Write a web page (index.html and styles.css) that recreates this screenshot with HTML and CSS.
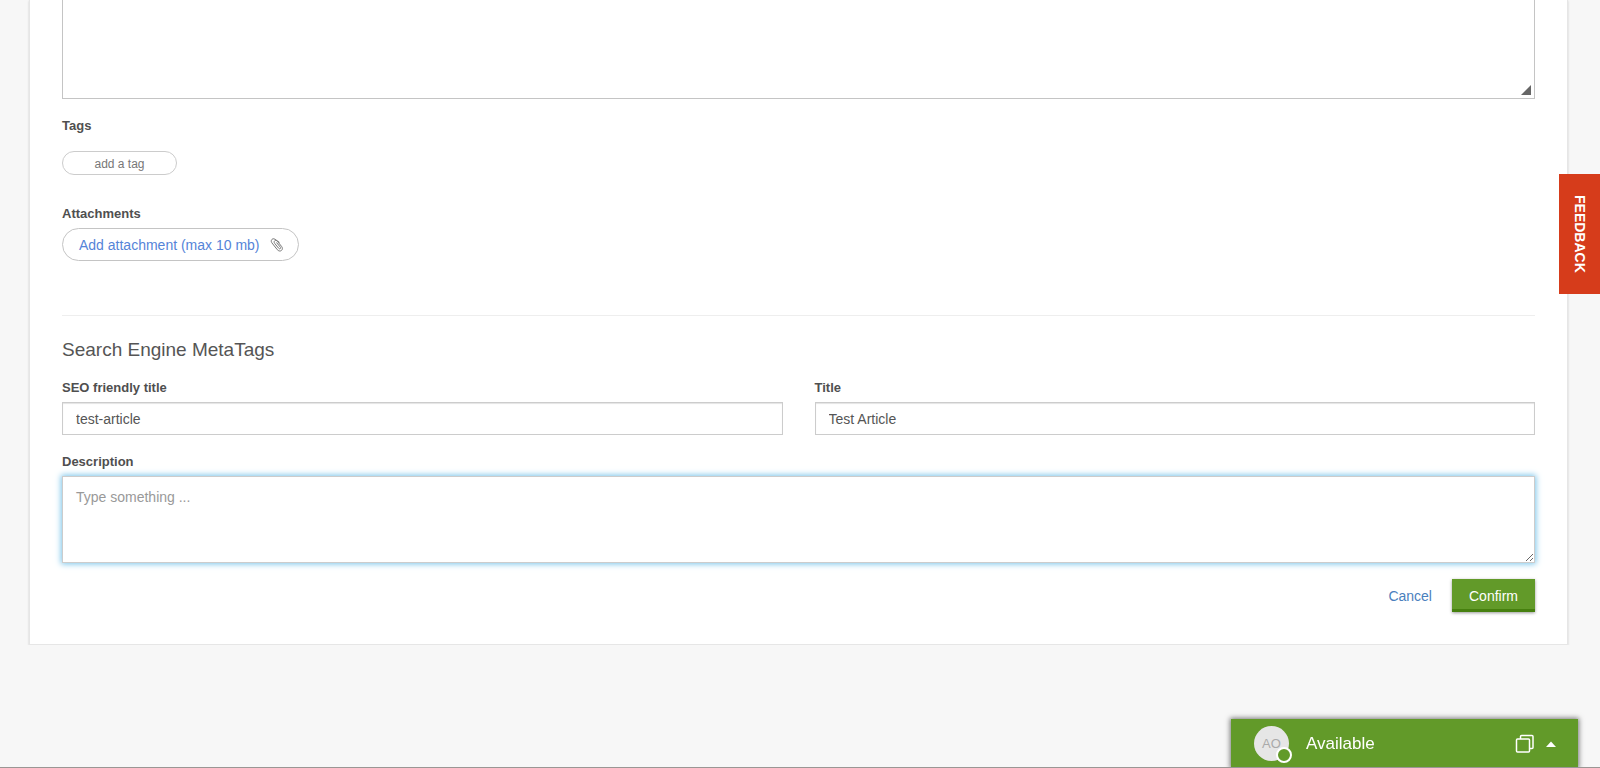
FILE: index.html
```html
<!DOCTYPE html>
<html lang="en">
<head>
<meta charset="utf-8">
<title>Edit article</title>
<link rel="stylesheet" href="styles.css">
</head>
<body>
<main class="card">
  <form>
    <div class="editor">
      <textarea class="editor-text" aria-label="Article body"></textarea>
      <svg class="editor-grip" width="10" height="10" viewBox="0 0 10 10" aria-hidden="true"><path d="M10 0V10H0Z" fill="#666"/></svg>
    </div>
    <div class="field tags">
      <label for="tag">Tags</label>
      <input class="tag-input" id="tag" type="text" placeholder="add a tag">
    </div>
    <div class="field attachments">
      <h3 class="label">Attachments</h3>
      <button class="attach" type="button">Add attachment (max 10 mb)
        <svg width="14" height="14" viewBox="0 0 14 14" fill="none" stroke="#777" stroke-width="1" stroke-linecap="round" aria-hidden="true"><path d="M9.2 4.2L5 1.3C3.4.2 1.9.9 1.4 2.3C1 3.400 1.500 4.300 2 5L7.300 11.700C8.400 13 10.200 13.500 11.400 12.500C12.700 11.500 12.600 9.800 11.700 8.600L7.400 3.300C6.600 2.300 5.500 2.200 4.700 2.800C3.900 3.500 4 4.500 4.700 5.400L8.700 10.300C9.200 10.900 9.900 11 10.300 10.600C10.800 10.200 10.700 9.600 10.300 9.100L6.700 4.800"/></svg>
      </button>
    </div>
    <hr class="divider">
    <h2 class="heading">Search Engine MetaTags</h2>
    <div class="row">
      <div class="field">
        <label for="seo">SEO friendly title</label>
        <input class="control" id="seo" type="text" value="test-article">
      </div>
      <div class="field">
        <label for="title">Title</label>
        <input class="control" id="title" type="text" value="Test Article">
      </div>
    </div>
    <div class="field description">
      <label for="description">Description</label>
      <textarea class="control area" id="description" placeholder="Type something ..."></textarea>
    </div>
    <div class="actions">
      <a class="cancel" href="#">Cancel</a>
      <button class="confirm" type="submit">Confirm</button>
    </div>
  </form>
</main>
<button class="feedback" type="button">FEEDBACK</button>
<aside class="chat">
  <div class="avatar">AO<span class="status"></span></div>
  <span class="chat-label">Available</span>
  <button class="icon-button" type="button" aria-label="Open in window"><svg width="20" height="20" viewBox="0 0 20 20" fill="none" stroke="#fff" stroke-width="1.500" aria-hidden="true"><rect x="1.500" y="5" width="13" height="13" rx="1"/><path d="M5.500 5V2.500Q5.500 1.500 6.500 1.500H17Q18 1.500 18 2.500V13.500Q18 14.500 17 14.500H14.500"/></svg></button>
  <button class="icon-button" type="button" aria-label="Expand"><svg width="10" height="6" viewBox="0 0 10 6" aria-hidden="true"><path d="M0 6L5 .5L10 6Z" fill="#fff"/></svg></button>
</aside>
<div class="edge"></div>
</body>
</html>
```
FILE: styles.css
```css
* { box-sizing: border-box; }
body {
  margin: 0;
  background: #f7f7f7;
  color: #555;
  font: 14px/20px "Liberation Sans", Arial, sans-serif;
}
button, input, textarea { font: inherit; color: inherit; }
.card {
  margin: 0 32px 0 29px;
  padding: 0 32px 32px;
  border: 1px solid #e6e6e6;
  border-top: 0;
  background: #fff;
  box-shadow: 0 1px 2px #ccc;
}
.editor { position: relative; }
.editor-text {
  display: block;
  width: 100%;
  height: 99px;
  padding: 12px;
  border: 1px solid #c4c4c4;
  border-top: 0;
  resize: none;
}
.editor-grip { position: absolute; right: 4px; bottom: 4px; }
.field { display: flex; flex-direction: column; align-items: flex-start; }
label, .label {
  margin: 0 0 4px;
  color: #4f4f4f;
  font-size: 13px;
  font-weight: 700;
  line-height: 20px;
}
.tags { margin-top: 17px; gap: 11px; }
.tag-input {
  width: 115px;
  height: 24px;
  padding: 1px 8px 0;
  border: 1px solid #ccc;
  border-radius: 12px;
  background: #fff;
  font-size: 12px;
  text-align: center;
}
.tag-input::placeholder { color: #777; }
.attachments { margin-top: 29px; }
.attach {
  display: flex;
  align-items: center;
  gap: 10px;
  height: 33px;
  padding: 0 14px 0 16px;
  border: 1px solid #c4c4c4;
  border-radius: 17px;
  background: #fff;
  color: #5584d8;
}
.divider { margin: 54px 0 20px; border: 0; border-top: 1px solid #eee; }
.heading { margin: 0 0 14px; font-size: 19px; font-weight: 400; line-height: 28px; }
.row { display: grid; grid-template-columns: 1fr 1fr; gap: 32px; }
.control {
  width: 100%;
  height: 33px;
  padding: 0 13px;
  border: 1px solid #ccc;
  border-radius: 0;
  background: #fff;
  box-shadow: inset 0 1px 1px #e4e4e4;
}
.description { margin-top: 17px; }
.area {
  display: block;
  height: 87px;
  padding: 10px 13px;
  box-shadow: 0 0 6px 1px #79c4ea;
  outline: 0;
}
.area::placeholder { color: #999; }
.actions {
  display: flex;
  justify-content: flex-end;
  align-items: center;
  gap: 20px;
  margin-top: 16px;
}
.cancel { color: #4a80bd; text-decoration: none; }
.confirm {
  height: 33px;
  padding: 0 17px;
  border: 0;
  background: #629a29;
  box-shadow: inset 0 -3px #46800f, 0 1px 3px #999;
  color: #fff;
}
.feedback {
  position: fixed;
  top: 174px;
  right: 0;
  width: 41px;
  height: 120px;
  padding: 0;
  border: 0;
  background: #d63c1b;
  color: #fff;
  font-weight: 700;
  writing-mode: vertical-rl;
}
.chat {
  position: fixed;
  right: 22px;
  bottom: 0;
  display: flex;
  align-items: center;
  width: 347px;
  height: 49px;
  padding: 0 22px 0 23px;
  background: #629a29;
  box-shadow: 0 0 5px 1px #777;
  color: #fff;
}
.avatar {
  position: relative;
  width: 35px;
  height: 35px;
  border-radius: 50%;
  background: #e6e6e6;
  color: #aaa;
  font-size: 13px;
  line-height: 35px;
  text-align: center;
}
.status {
  position: absolute;
  right: -3px;
  bottom: -2px;
  width: 16px;
  height: 16px;
  border: 2px solid #fff;
  border-radius: 50%;
  background: #629a29;
}
.chat-label { flex: 1; margin-left: 17px; font-size: 17px; }
.icon-button { display: flex; margin-left: 11px; padding: 0; border: 0; background: none; }
.edge { position: fixed; right: 0; bottom: 0; left: 0; height: 1px; background: #9a9694; }
```
